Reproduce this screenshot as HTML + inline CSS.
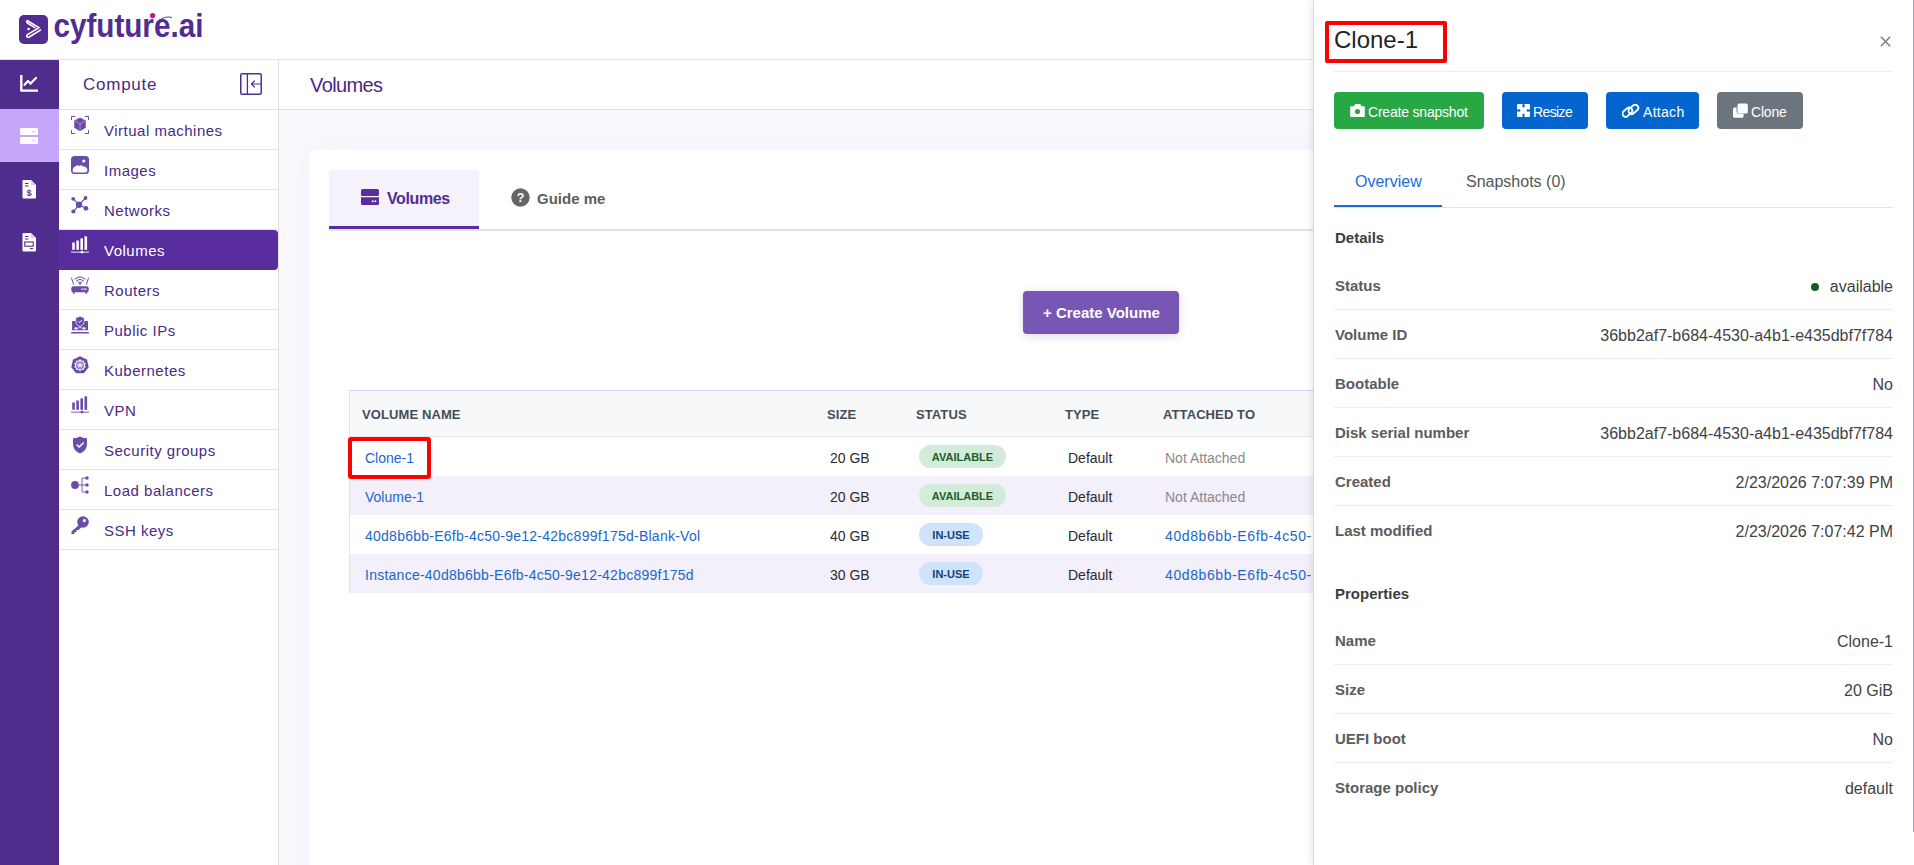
<!DOCTYPE html>
<html><head><meta charset="utf-8">
<style>
*{box-sizing:border-box;margin:0;padding:0}
html,body{width:1914px;height:865px;overflow:hidden;background:#fff;font-family:"Liberation Sans",sans-serif}
.a{position:absolute}
.t{position:absolute;white-space:pre;line-height:1}
#hdr{left:0;top:0;width:1914px;height:60px;background:#fff;border-bottom:1px solid #e2e2e2}
#rail{left:0;top:60px;width:59px;height:805px;background:#502d8c}
#side{left:59px;top:60px;width:220px;height:805px;background:#fff;border-right:1px solid #e0e0e0}
#main{left:279px;top:60px;width:1635px;height:805px;background:#fbf9fe}
#mainhdr{left:279px;top:60px;width:1635px;height:50px;background:#fff;border-bottom:1px solid #e0e0e0}
#card{left:309px;top:150px;width:1100px;height:760px;background:#fff;border-radius:8px;box-shadow:0 0 32px rgba(110,70,200,0.06)}
#panel{left:1313px;top:0;width:601px;height:865px;background:#fff;border-left:1px solid #d8d8dc;box-shadow:-3px 0 6px rgba(0,0,0,0.07)}
.si{left:59px;width:219px;height:40px;border-bottom:1px solid #e3e3e6}
.sl{left:104px;font-size:15px;color:#4a2a86;letter-spacing:0.5px;margin-top:1px}
.ic{position:absolute;left:71px;width:18px;height:18px}
.th{font-size:13px;font-weight:700;color:#454d57;letter-spacing:0.1px}
.td{font-size:14px;color:#2b2b2b;margin-top:1px}
.lk{font-size:14px;color:#1a67c9;margin-top:1px}
.na{font-size:14px;color:#8a8a8a;margin-top:1px}
.bd{position:absolute;height:23px;border-radius:11.5px;font-size:11px;font-weight:700;line-height:23px;margin-top:-1px;padding-top:1px;text-align:center}
.g{background:#d3ecd9;color:#1b5e2a}
.b{background:#cfe3fb;color:#133f7e}
.pb{position:absolute;top:92px;height:37px;border-radius:4px;color:#fff;font-size:14px}
.pl{left:1335px;font-size:15px;font-weight:700;color:#5c5c5c}
.pv{right:21px;margin-top:2px;font-size:16px;color:#424242;text-align:right}
.dv{position:absolute;left:1334px;width:559px;height:1px;background:#ececec}
</style></head><body>
<div id="hdr" class="a"></div>
<!-- logo -->
<svg class="a" style="left:19px;top:15px" width="29" height="29" viewBox="0 0 29 29">
<rect x="0" y="0" width="29" height="29" rx="5" fill="#512d91"/>
<path d="M8.5 5.8 L20 12.6 L8.5 19.6 Q7 20.6 8.2 22 Q9 22.6 10.2 22 L21.5 15" fill="none" stroke="#fff" stroke-width="1.6" stroke-linecap="round" stroke-linejoin="round"/>
<path d="M8.3 5.6 Q7 6.8 8.4 8 L16 12.6" fill="none" stroke="#fff" stroke-width="1.6" stroke-linecap="round"/>
<circle cx="9.6" cy="14" r="1.3" fill="#fff"/>
</svg>
<svg class="a" style="left:50px;top:0px" width="170" height="55" viewBox="0 0 170 55"><text x="3.4" y="37.4" font-family="Liberation Sans" font-size="33.5" font-weight="700" fill="#512d91" textLength="150" lengthAdjust="spacingAndGlyphs">cyfuture.ai</text><circle cx="102.6" cy="15.6" r="2.6" fill="#c0168f"/><path d="M106 23 Q114 15 122 17.5" fill="none" stroke="#512d91" stroke-width="0.9"/></svg>

<div id="rail" class="a"></div>
<div class="a" style="left:0;top:109px;width:59px;height:53px;background:#c5a6fb"></div>
<!-- rail icons -->
<svg class="a" style="left:20px;top:75px" width="18" height="17" viewBox="0 0 18 17"><path d="M1.3 0.5 V15.6 H17.3" fill="none" stroke="#fff" stroke-width="2.4" stroke-linecap="round" stroke-linejoin="round"/><path d="M4.5 9.8 L8 6 L10.6 8.6 L16 3" fill="none" stroke="#fff" stroke-width="2.2" stroke-linecap="round" stroke-linejoin="round"/></svg>
<svg class="a" style="left:20px;top:128px" width="18" height="17" viewBox="0 0 18 17"><rect x="0" y="0" width="18" height="7" rx="1" fill="#fff"/><rect x="0" y="9" width="18" height="7" rx="1" fill="#fff"/><circle cx="12.5" cy="3.5" r="0.6" fill="#c5a6fb"/><circle cx="14.5" cy="3.5" r="0.6" fill="#c5a6fb"/><circle cx="12.5" cy="12.5" r="0.6" fill="#c5a6fb"/><circle cx="14.5" cy="12.5" r="0.6" fill="#c5a6fb"/></svg>
<svg class="a" style="left:22px;top:180px" width="14" height="19" viewBox="0 0 14 19"><path d="M1.5 0 H9 L14 5 V17.5 Q14 18.5 13 18.5 H1.5 Q0.5 18.5 0.5 17.5 V1 Q0.5 0 1.5 0Z" fill="#fff"/><path d="M9 0 V5 H14" fill="#d9cdf0"/><rect x="3" y="3" width="3.5" height="1" fill="#502d8c"/><rect x="3" y="5.5" width="3.5" height="1" fill="#502d8c"/><text x="7" y="15.5" font-size="8.5" font-weight="700" text-anchor="middle" fill="#502d8c" font-family="Liberation Sans">$</text></svg>
<svg class="a" style="left:22px;top:233px" width="14" height="19" viewBox="0 0 14 19"><path d="M1.5 0 H9 L14 5 V17.5 Q14 18.5 13 18.5 H1.5 Q0.5 18.5 0.5 17.5 V1 Q0.5 0 1.5 0Z" fill="#fff"/><path d="M9 0 V5 H14" fill="#d9cdf0"/><rect x="3" y="3" width="3.5" height="1" fill="#502d8c"/><rect x="3" y="5.5" width="3.5" height="1" fill="#502d8c"/><rect x="2.8" y="9" width="8.4" height="4.2" fill="none" stroke="#502d8c" stroke-width="1.1"/><rect x="8" y="15" width="3" height="1" fill="#502d8c"/></svg>

<div id="side" class="a"></div>
<div class="a" style="left:59px;top:60px;width:219px;height:50px;border-bottom:1px solid #e0e0e0"></div>
<div class="t" style="left:83px;top:76px;font-size:17px;color:#4a2a86;letter-spacing:0.75px">Compute</div>
<svg class="a" style="left:240px;top:73px" width="22" height="22" viewBox="0 0 22 22"><rect x="0.75" y="0.75" width="20.5" height="20.5" rx="1.5" fill="none" stroke="#512d91" stroke-width="1.5"/><line x1="7.4" y1="1" x2="7.4" y2="21" stroke="#512d91" stroke-width="1.3"/><path d="M21 11 H11.5 M14.4 8 L11.4 11 L14.4 14" fill="none" stroke="#512d91" stroke-width="1.2" stroke-linecap="round" stroke-linejoin="round"/></svg>

<div class="a si" style="top:110px"></div>
<div class="a si" style="top:150px"></div>
<div class="a si" style="top:190px"></div>
<div class="a" style="left:59px;top:230px;width:219px;height:40px;background:#5a2d9e;border-radius:0 4px 4px 0"></div>
<div class="a si" style="top:270px"></div>
<div class="a si" style="top:310px"></div>
<div class="a si" style="top:350px"></div>
<div class="a si" style="top:390px"></div>
<div class="a si" style="top:430px"></div>
<div class="a si" style="top:470px"></div>
<div class="a si" style="top:510px"></div>

<div class="t sl" style="top:122px">Virtual machines</div>
<div class="t sl" style="top:162px">Images</div>
<div class="t sl" style="top:202px">Networks</div>
<div class="t sl" style="top:242px;color:#fff">Volumes</div>
<div class="t sl" style="top:282px">Routers</div>
<div class="t sl" style="top:322px">Public IPs</div>
<div class="t sl" style="top:362px">Kubernetes</div>
<div class="t sl" style="top:402px">VPN</div>
<div class="t sl" style="top:442px">Security groups</div>
<div class="t sl" style="top:482px">Load balancers</div>
<div class="t sl" style="top:522px">SSH keys</div>

<!-- sidebar icons -->
<svg class="ic" style="top:116px" viewBox="0 0 18 18"><path d="M0.5 4 V0.5 H4 M14 0.5 H17.5 V4 M17.5 14 V17.5 H14 M4 17.5 H0.5 V14" fill="none" stroke="#6a4ca6" stroke-width="1"/><path d="M9 1.6 L14.8 4.6 V11.8 L9 15.2 L3.2 11.8 V4.6Z" fill="#6a4ca6"/><path d="M3.5 4.8 L9 7.8 L14.5 4.8 M9 7.8 V15" fill="none" stroke="#b9a8dc" stroke-width="0.7"/></svg>
<svg class="ic" style="top:156px" viewBox="0 0 18 18"><rect x="0" y="0" width="18" height="18" rx="3.5" fill="#6a4ca6"/><path d="M1.6 15 Q1.6 11.5 4.5 10.6 Q6 8 8.3 10 Q10 8.5 11.6 10.3 Q16.4 10.5 16.4 14.6 Q16.4 16.4 14.6 16.4 H3.2 Q1.6 16.4 1.6 15Z" fill="#fff"/><circle cx="12.8" cy="5" r="1.6" fill="#fff"/></svg>
<svg class="ic" style="top:196px" viewBox="0 0 18 18"><path d="M2.2 2.8 L8 8.8 L14.5 2 M8 8.8 L2.2 15.8 M8 8.8 L15 12.3" fill="none" stroke="#6a4ca6" stroke-width="1.1"/><circle cx="8" cy="8.8" r="3.2" fill="#6a4ca6"/><circle cx="2.2" cy="2.8" r="1.9" fill="#6a4ca6"/><circle cx="14.5" cy="2" r="1.9" fill="#6a4ca6"/><circle cx="2.4" cy="15.5" r="2.1" fill="#6a4ca6"/><circle cx="14.9" cy="12.3" r="2.4" fill="#6a4ca6"/></svg>
<svg class="ic" style="top:236px" viewBox="0 0 18 18"><rect x="1.2" y="6.5" width="2.6" height="7.3" fill="#fff"/><rect x="5.3" y="4.5" width="2.6" height="9.3" fill="#fff"/><rect x="9.4" y="2.4" width="2.6" height="11.4" fill="#fff"/><rect x="13.5" y="0.3" width="2.6" height="13.5" fill="#fff"/><rect x="0" y="15.7" width="18" height="0.9" fill="#fff"/><circle cx="11" cy="16.1" r="1.4" fill="#fff"/></svg>
<svg class="ic" style="top:276px" viewBox="0 0 18 18"><path d="M0.4 1.6 L2.6 8.6 M17.6 1.6 L15.4 8.6" stroke="#6a4ca6" stroke-width="1"/><path d="M3.6 3.4 Q9 -1.4 14.4 3.4 M5.3 5.1 Q9 2 12.7 5.1 M7.1 6.7 Q9 5.3 10.9 6.7" fill="none" stroke="#6a4ca6" stroke-width="1.1"/><circle cx="9" cy="8" r="0.9" fill="#6a4ca6"/><rect x="0.3" y="10.2" width="17.4" height="6" rx="2" fill="#6a4ca6"/><rect x="1.8" y="15.5" width="1.8" height="2.3" rx="0.6" fill="#6a4ca6"/><rect x="14.4" y="15.5" width="1.8" height="2.3" rx="0.6" fill="#6a4ca6"/><rect x="10.6" y="12.2" width="0.9" height="2" fill="#fff"/><rect x="12.6" y="12.2" width="0.9" height="2" fill="#fff"/><rect x="14.4" y="12.2" width="0.9" height="2" fill="#fff"/></svg>
<svg class="ic" style="top:316px" viewBox="0 0 18 18"><rect x="1.1" y="5" width="15.9" height="9.3" rx="0.6" fill="#6a4ca6"/><rect x="0" y="15.9" width="18" height="1.7" rx="0.85" fill="#6a4ca6"/><path d="M9 0.2 L13.3 1.8 V5.4 Q13.3 8.8 9 10.8 Q4.7 8.8 4.7 5.4 V1.8Z" fill="#6a4ca6" stroke="#fff" stroke-width="0.7"/><path d="M7.1 5.2 L8.5 6.6 L11 4" fill="none" stroke="#fff" stroke-width="1"/><path d="M3.2 12.4 H6.6 M11.4 12.4 H14.8 M6.8 12.4 Q9 11.5 9 10.6 Q9 11.5 11.2 12.4" fill="none" stroke="#fff" stroke-width="0.8"/><circle cx="5" cy="12.4" r="1.1" fill="none" stroke="#fff" stroke-width="0.7"/><circle cx="13" cy="12.4" r="1.1" fill="none" stroke="#fff" stroke-width="0.7"/></svg>
<svg class="ic" style="top:356px" viewBox="0 0 18 18"><path d="M9 0.3 L16 3.6 L17.7 11.2 L12.9 17.3 H5.1 L0.3 11.2 L2 3.6Z" fill="#6a4ca6"/><circle cx="9" cy="9.2" r="4.6" fill="none" stroke="#fff" stroke-width="1.1"/><circle cx="9" cy="9.2" r="1.3" fill="#fff"/><path d="M9 3 V15.4 M3.2 7.3 L14.8 11.1 M14.8 7.3 L3.2 11.1 M5.2 14 L12.8 4.4 M12.8 14 L5.2 4.4" stroke="#fff" stroke-width="0.8"/></svg>
<svg class="ic" style="top:396px" viewBox="0 0 18 18"><rect x="1.2" y="6.5" width="2.6" height="7.3" fill="#6a4ca6"/><rect x="5.3" y="4.5" width="2.6" height="9.3" fill="#6a4ca6"/><rect x="9.4" y="2.4" width="2.6" height="11.4" fill="#6a4ca6"/><rect x="13.5" y="0.3" width="2.6" height="13.5" fill="#6a4ca6"/><rect x="0" y="15.7" width="18" height="0.9" fill="#6a4ca6"/><circle cx="11" cy="16.1" r="1.4" fill="#6a4ca6"/></svg>
<svg class="ic" style="top:436px" viewBox="0 0 18 18"><path d="M9 0.5 Q12.5 2.4 16 2.2 V8 Q16 14.5 9 17.5 Q2 14.5 2 8 V2.2 Q5.5 2.4 9 0.5Z" fill="#6a4ca6"/><path d="M6 9 L8.2 11 L12.2 7" fill="none" stroke="#fff" stroke-width="1.6" stroke-linecap="round" stroke-linejoin="round"/></svg>
<svg class="ic" style="top:476px" viewBox="0 0 18 18"><circle cx="4" cy="9" r="3.9" fill="#6a4ca6"/><path d="M7.5 9 H11 M11 2.5 V15.5 Q11 16 12 16 H15 M11 3 Q11 2 12 2 H15 M11 9 H15" fill="none" stroke="#6a4ca6" stroke-width="0.9"/><circle cx="16" cy="2" r="1.7" fill="#6a4ca6"/><circle cx="16" cy="9" r="1.7" fill="#6a4ca6"/><circle cx="16" cy="16" r="1.7" fill="#6a4ca6"/></svg>
<svg class="ic" style="top:516px" viewBox="0 0 18 18"><circle cx="12" cy="6" r="5.8" fill="#6a4ca6"/><circle cx="13.4" cy="4.6" r="1.6" fill="#fff"/><path d="M8.5 8.5 L0.5 15.5 V18 H3.5 V16 H5.5 V14 H7.5 L10.5 11Z" fill="#6a4ca6"/></svg>

<!-- main -->
<div id="main" class="a"></div>
<div id="mainhdr" class="a"></div>
<div class="t" style="left:310px;top:75px;font-size:20px;color:#4a2a86;letter-spacing:-0.6px">Volumes</div>
<div id="card" class="a"></div>
<div class="a" style="left:329px;top:229px;width:984px;height:2px;background:#e4e4e4"></div>
<div class="a" style="left:329px;top:170px;width:150px;height:59px;background:#f5f2fc;border-bottom:3px solid #5a2d9e"></div>
<svg class="a" style="left:361px;top:189px" width="18" height="16" viewBox="0 0 18 16"><rect x="0" y="0" width="18" height="7" rx="1.5" fill="#5a2d9e"/><path d="M0 8.2 H18 V14.5 Q18 16 16.5 16 H1.5 Q0 16 0 14.5Z" fill="#5a2d9e"/><circle cx="11.6" cy="12.2" r="1" fill="#fff"/><circle cx="14.4" cy="12.2" r="1" fill="#fff"/></svg>
<div class="t" style="left:387px;top:191px;font-size:16px;font-weight:700;color:#512d91;letter-spacing:-0.4px">Volumes</div>
<svg class="a" style="left:511px;top:188px" width="19" height="19" viewBox="0 0 19 19"><circle cx="9.5" cy="9.5" r="9.2" fill="#666"/><text x="9.5" y="14" font-size="12.5" font-weight="700" text-anchor="middle" fill="#fff" font-family="Liberation Sans">?</text></svg>
<div class="t" style="left:537px;top:191px;font-size:15px;font-weight:700;color:#5e5e5e">Guide me</div>

<div class="a" style="left:1023px;top:291px;width:156px;height:43px;background:#7856b3;border-radius:4px;box-shadow:0 2px 10px rgba(90,45,158,0.18)"></div>
<div class="t" style="left:1043px;top:305px;font-size:15px;font-weight:700;color:#fff">+ Create Volume</div>

<!-- table -->
<div class="a" style="left:349px;top:390px;width:970px;height:203px;border-top:1px solid #d9d2ec;border-left:1px solid #e3def0"></div>
<div class="a" style="left:350px;top:391px;width:970px;height:46px;background:#f7f8fa;border-bottom:1px solid #e6e6ea"></div>
<div class="a" style="left:350px;top:476px;width:970px;height:39px;background:#f3effb"></div>
<div class="a" style="left:350px;top:554px;width:970px;height:39px;background:#f3effb"></div>
<div class="t th" style="left:362px;top:408px">VOLUME NAME</div>
<div class="t th" style="left:827px;top:408px">SIZE</div>
<div class="t th" style="left:916px;top:408px">STATUS</div>
<div class="t th" style="left:1065px;top:408px">TYPE</div>
<div class="t th" style="left:1163px;top:408px">ATTACHED TO</div>

<div class="t lk" style="left:365px;top:450px">Clone-1</div>
<div class="t lk" style="left:365px;top:489px">Volume-1</div>
<div class="t lk" style="left:365px;top:528px;letter-spacing:0.25px">40d8b6bb-E6fb-4c50-9e12-42bc899f175d-Blank-Vol</div>
<div class="t lk" style="left:365px;top:567px;letter-spacing:0.25px">Instance-40d8b6bb-E6fb-4c50-9e12-42bc899f175d</div>
<div class="t td" style="left:830px;top:450px">20 GB</div>
<div class="t td" style="left:830px;top:489px">20 GB</div>
<div class="t td" style="left:830px;top:528px">40 GB</div>
<div class="t td" style="left:830px;top:567px">30 GB</div>
<div class="bd g" style="left:919px;top:446px;width:87px">AVAILABLE</div>
<div class="bd g" style="left:919px;top:485px;width:87px">AVAILABLE</div>
<div class="bd b" style="left:919px;top:524px;width:64px">IN-USE</div>
<div class="bd b" style="left:919px;top:563px;width:64px">IN-USE</div>
<div class="t td" style="left:1068px;top:450px">Default</div>
<div class="t td" style="left:1068px;top:489px">Default</div>
<div class="t td" style="left:1068px;top:528px">Default</div>
<div class="t td" style="left:1068px;top:567px">Default</div>
<div class="t na" style="left:1165px;top:450px">Not Attached</div>
<div class="t na" style="left:1165px;top:489px">Not Attached</div>
<div class="t lk" style="left:1165px;top:528px;letter-spacing:0.6px">40d8b6bb-E6fb-4c50-</div>
<div class="t lk" style="left:1165px;top:567px;letter-spacing:0.6px">40d8b6bb-E6fb-4c50-</div>

<div class="a" style="left:348px;top:437px;width:83px;height:42px;border:4px solid #f00;border-radius:3px"></div>

<!-- panel -->
<div id="panel" class="a"></div>
<div class="a" style="left:1913px;top:0;width:1px;height:832px;background:#9aa6b8"></div>
<div class="t" style="left:1334px;top:28px;font-size:24px;color:#212529">Clone-1</div>
<div class="a" style="left:1325px;top:21px;width:122px;height:42px;border:4.5px solid #f00;border-radius:2px"></div>
<svg class="a" style="left:1880px;top:36px" width="11" height="11" viewBox="0 0 11 11"><path d="M0.8 0.8 L10.2 10.2 M10.2 0.8 L0.8 10.2" stroke="#808080" stroke-width="1.5"/></svg>
<div class="dv" style="top:71px"></div>

<div class="pb" style="left:1334px;width:150px;background:#28a745"></div>
<svg class="a" style="left:1350px;top:104px" width="15" height="13" viewBox="0 0 15 13"><path d="M1.2 2.2 H4 L4.8 0.6 Q5 0 5.6 0 H10 Q10.5 0 10.7 0.6 L11.4 2.2 H13.8 Q14.8 2.2 14.8 3.2 V12 Q14.8 13 13.8 13 H1.2 Q0.2 13 0.2 12 V3.2 Q0.2 2.2 1.2 2.2Z" fill="#fff"/><circle cx="7.5" cy="7.5" r="2.6" fill="#28a745"/></svg>
<div class="t" style="left:1368px;top:105px;font-size:14px;color:#fff;letter-spacing:-0.2px">Create snapshot</div>
<div class="pb" style="left:1502px;width:86px;background:#0465cf"></div>
<svg class="a" style="left:1517px;top:104px" width="13" height="13" viewBox="0 0 13 13"><rect x="0" y="0" width="13" height="13" rx="0.8" fill="#fff"/><path d="M5.6 0 H7.4 V1.6 Q8.6 2.4 6.5 3.6 Q4.4 2.4 5.6 1.6Z M5.6 13 H7.4 V11.4 Q8.6 10.6 6.5 9.4 Q4.4 10.6 5.6 11.4Z M0 5.6 V7.4 H1.6 Q2.4 8.6 3.6 6.5 Q2.4 4.4 1.6 5.6Z M13 5.6 V7.4 H11.4 Q10.6 8.6 9.4 6.5 Q10.6 4.4 11.4 5.6Z" fill="#0465cf"/></svg>
<div class="t" style="left:1533px;top:105px;font-size:14px;color:#fff;letter-spacing:-0.6px">Resize</div>
<div class="pb" style="left:1606px;width:93px;background:#0465cf"></div>
<svg class="a" style="left:1622px;top:104px" width="18" height="14" viewBox="0 0 18 14"><g transform="rotate(-40 5.4 8.2)"><rect x="0" y="5.1" width="10.8" height="6.2" rx="3.1" fill="none" stroke="#fff" stroke-width="1.9"/></g><g transform="rotate(-40 11.4 5.4)"><rect x="6" y="2.3" width="10.8" height="6.2" rx="3.1" fill="none" stroke="#fff" stroke-width="1.9"/></g></svg>
<div class="t" style="left:1643px;top:105px;letter-spacing:0.3px;font-size:14px;color:#fff">Attach</div>
<div class="pb" style="left:1717px;width:86px;background:#6c757d"></div>
<svg class="a" style="left:1733px;top:103px" width="15" height="16" viewBox="0 0 15 16"><rect x="0" y="4.6" width="10.5" height="10.2" rx="1.6" fill="#fff"/><rect x="3.6" y="-0.4" width="11.4" height="11.2" rx="2" fill="#6c757d"/><rect x="4.5" y="0.4" width="10.3" height="10.2" rx="1.6" fill="#fff"/></svg>
<div class="t" style="left:1751px;top:105px;font-size:14px;color:#fff;letter-spacing:-0.2px">Clone</div>

<div class="t" style="left:1355px;top:174px;font-size:16px;color:#1a6dd6">Overview</div>
<div class="t" style="left:1466px;top:174px;font-size:16px;color:#555">Snapshots (0)</div>
<div class="a" style="left:1334px;top:207px;width:559px;height:1px;background:#e2e2e2"></div>
<div class="a" style="left:1334px;top:205px;width:108px;height:2px;background:#1a6dd6"></div>

<div class="t" style="left:1335px;top:230px;font-size:15px;font-weight:700;color:#3c3c3c">Details</div>

<div class="t pl" style="top:278px">Status</div>
<svg class="a" style="left:1811px;top:283px" width="8" height="8"><circle cx="4" cy="4" r="4" fill="#155d27"/></svg>
<div class="t pv" style="top:277px">available</div>
<div class="dv" style="top:309px"></div>
<div class="t pl" style="top:327px">Volume ID</div>
<div class="t pv" style="top:326px">36bb2af7-b684-4530-a4b1-e435dbf7f784</div>
<div class="dv" style="top:358px"></div>
<div class="t pl" style="top:376px">Bootable</div>
<div class="t pv" style="top:375px">No</div>
<div class="dv" style="top:407px"></div>
<div class="t pl" style="top:425px">Disk serial number</div>
<div class="t pv" style="top:424px">36bb2af7-b684-4530-a4b1-e435dbf7f784</div>
<div class="dv" style="top:456px"></div>
<div class="t pl" style="top:474px">Created</div>
<div class="t pv" style="top:473px">2/23/2026 7:07:39 PM</div>
<div class="dv" style="top:505px"></div>
<div class="t pl" style="top:523px">Last modified</div>
<div class="t pv" style="top:522px">2/23/2026 7:07:42 PM</div>

<div class="t" style="left:1335px;top:586px;font-size:15px;font-weight:700;color:#3c3c3c">Properties</div>
<div class="t pl" style="top:633px">Name</div>
<div class="t pv" style="top:632px">Clone-1</div>
<div class="dv" style="top:664px"></div>
<div class="t pl" style="top:682px">Size</div>
<div class="t pv" style="top:681px">20 GiB</div>
<div class="dv" style="top:713px"></div>
<div class="t pl" style="top:731px">UEFI boot</div>
<div class="t pv" style="top:730px">No</div>
<div class="dv" style="top:762px"></div>
<div class="t pl" style="top:780px">Storage policy</div>
<div class="t pv" style="top:779px">default</div>
</body></html>
